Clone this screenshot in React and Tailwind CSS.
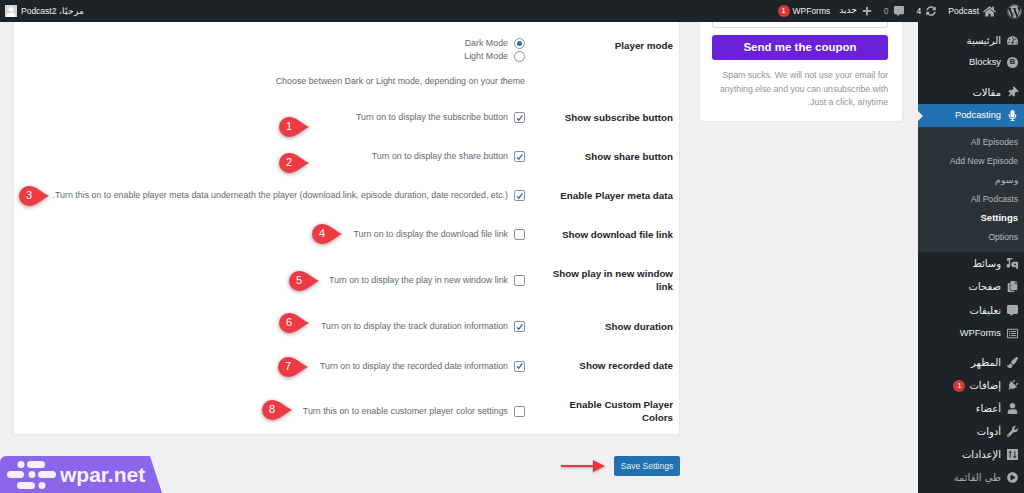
import React from 'react';
import {
    FaWordpress, FaHome, FaSyncAlt, FaCommentAlt, FaPlus, FaUser, FaTachometerAlt, FaThumbtack, FaMicrophone,
    FaCopy, FaPaintBrush, FaPlug, FaWrench, FaPlayCircle, FaRegListAlt,
} from 'react-icons/fa';

const rows = [
    { label: 'Show subscribe button', desc: 'Turn on to display the subscribe button', on: true, h: 'h-[39px]', mark: 1, mx: 'left-[265px]', my: 'top-[19px]' },
    { label: 'Show share button', desc: 'Turn on to display the share button', on: true, h: 'h-[39px]', mark: 2, mx: 'left-[265px]', my: 'top-[16px]' },
    { label: 'Enable Player meta data', desc: 'Turn this on to enable player meta data underneath the player (download link, episode duration, date recorded, etc.).', on: true, h: 'h-[39px]', mark: 3, mx: 'left-[5px]', my: 'top-[10px]' },
    { label: 'Show download file link', desc: 'Turn on to display the download file link', on: false, h: 'h-[39px]', mark: 4, mx: 'left-[298px]', my: 'top-[9px]' },
    { label: 'Show play in new window link', desc: 'Turn on to display the play in new window link', on: false, h: 'h-[53px]', mark: 5, mx: 'left-[275px]', my: 'top-[17px]' },
    { label: 'Show duration', desc: 'Turn on to display the track duration information', on: true, h: 'h-[39px]', mark: 6, mx: 'left-[265px]', my: 'top-[6px]' },
    { label: 'Show recorded date', desc: 'Turn on to display the recorded date information', on: true, h: 'h-[40px]', mark: 7, mx: 'left-[264px]', my: 'top-[11px]' },
    { label: 'Enable Custom Player Colors', desc: 'Turn this on to enable customer player color settings', on: false, h: 'h-[50px]', mark: 8, mx: 'left-[248px]', my: 'top-[14px]' },
];

const BlocksyIcon = () => (
    <span className="w-[11px] h-[11px] rounded-full bg-[#a7aaad] text-[#1d2327] text-[8px] font-bold flex items-center justify-center">B</span>
);

const MediaIcon = () => (
    <svg viewBox="0 0 14 14" className="w-[13px] h-[13px]" fill="currentColor">
        <path d="M1 1 H7 V2.5 H4.5 V9.5 A2 2 0 1 1 3 7.6 V4 H1 Z" />
        <path d="M8 5 H13 V13 H11 V11 H9.5 A3 3 0 0 1 8 5Z M9.8 7 A1 1 0 1 0 9.8 9 A1 1 0 1 0 9.8 7Z" fillRule="evenodd" />
    </svg>
);

const SettingsIcon = () => (
    <svg viewBox="0 0 12 12" className="w-[11px] h-[11px]" fill="currentColor">
        <path fillRule="evenodd" d="M0 0 H12 V12 H0 Z M2 3 V4 H3 V9.5 H4 V4 H5 V3 H4 V2 H3 V3 Z M7 8 V9 H8 V10 H9 V9 H10 V8 H9 V2.5 H8 V8 Z" />
    </svg>
);

const PinIcon = () => <FaThumbtack className="rotate-45" />;
const PlugIcon = () => <FaPlug className="rotate-45" />;

const subMenu = ['All Episodes', 'Add New Episode', 'وسوم', 'All Podcasts', 'Settings', 'Options'];

const menuMid = [
    { icon: MediaIcon, text: 'وسائط' },
    { icon: FaCopy, text: 'صفحات' },
    { icon: FaCommentAlt, text: 'تعليقات' },
    { icon: FaRegListAlt, text: 'WPForms', latin: true },
];

const menuLow = [
    { icon: FaPaintBrush, text: 'المظهر' },
    { icon: PlugIcon, text: 'إضافات', badge: 1 },
    { icon: FaUser, text: 'أعضاء' },
    { icon: FaWrench, text: 'أدوات' },
    { icon: SettingsIcon, text: 'الإعدادات' },
];

const Checkbox = ({ on }) => (
    <span className="w-[11px] h-[11px] shrink-0 bg-white border border-[#8c8f94] rounded-[2px] flex items-center justify-center">
        {on && (
            <svg viewBox="0 0 12 12" className="w-[10px] h-[10px]">
                <path d="M2.5 6.5 L5 9 L9.8 2.5" fill="none" stroke="#2271b1" strokeWidth="1.7" />
            </svg>
        )}
    </span>
);

const Marker = ({ n, className }) => (
    <div className={`absolute w-[30px] h-[20px] ${className}`}>
        <svg viewBox="0 0 30 20" className="absolute inset-0 w-[30px] h-[20px] overflow-visible drop-shadow-[0_1px_2px_rgba(0,0,0,0.4)]">
            <path d="M10 0 C17 0 22 6 30 10 C22 14 17 20 10 20 A10 10 0 0 1 10 0Z" fill="#ee3a43" />
        </svg>
        <span dir="ltr" className="absolute left-0 top-0 w-[20px] h-[20px] flex items-center justify-center text-white text-[11px]">{n}</span>
    </div>
);

const MenuItem = ({ icon: Icon, text, badge, latin, h = 'h-[23px]' }) => (
    <div className={`${h} flex items-center text-[#f0f0f1]`}>
        <span className="w-[23px] flex justify-center text-[#a7aaad] text-[11px]"><Icon /></span>
        <span className={latin ? 'text-[9.3px] pt-[1px]' : "text-[10px] font-['DejaVu_Sans',sans-serif]"}>{text}</span>
        {badge && <span className="mr-[4px] w-[12px] h-[12px] rounded-full bg-[#d63638] text-white text-[8px] flex items-center justify-center">{badge}</span>}
    </div>
);

export default function App() {
    return (
        <div dir="rtl" className="h-[493px] w-[1024px] overflow-hidden relative bg-[#f0f0f3] font-['Liberation_Sans',sans-serif]">
            {/* Admin bar */}
            <div className="h-[22px] bg-[#1d2327] flex items-center text-[#f0f0f1] text-[8.5px] pr-[2px] pl-[5px]">
                <FaWordpress className="text-[#a7aaad] text-[15px] ml-[11px]" />
                <FaHome className="text-[#a7aaad] text-[13px] ml-[4px]" />
                <span className="ml-[12px]">Podcast</span>
                <FaSyncAlt className="text-[#a7aaad] text-[10px] ml-[5px]" />
                <span className="ml-[13px]">4</span>
                <FaCommentAlt className="text-[#a7aaad] text-[10px] ml-[5px]" />
                <span className="ml-[12px] text-[#a7aaad]">0</span>
                <FaPlus className="text-[#a7aaad] text-[10px] ml-[5px]" />
                <span className="ml-[9px] font-['DejaVu_Sans',sans-serif] text-[9px]">جديد</span>
                <span className="ml-[3px]">WPForms</span>
                <span className="w-[12px] h-[12px] rounded-full bg-[#d63638] text-white text-[8px] flex items-center justify-center">1</span>
                <div className="mr-auto flex items-center gap-[4px]">
                    <span>مرحبًا، Podcast2</span>
                    <span className="w-[12px] h-[12px] bg-[#d5d5d5] flex items-end justify-center overflow-hidden"><FaUser className="text-white text-[10px]" /></span>
                </div>
            </div>

            <div className="flex h-[471px]">
                {/* Sidebar */}
                <div className="w-[106px] shrink-0 bg-[#1d2327] pt-[7px]">
                    <MenuItem icon={FaTachometerAlt} text="الرئيسية" h="h-[22px]" />
                    <MenuItem icon={BlocksyIcon} text="Blocksy" h="h-[22px]" latin />
                    <div className="h-[8px]" />
                    <MenuItem icon={PinIcon} text="مقالات" />
                    <div className="h-[23px] bg-[#2271b1] text-white flex items-center relative">
                        <span className="w-[23px] flex justify-center text-[11px]"><FaMicrophone /></span>
                        <span className="text-[9.3px]">Podcasting</span>
                        <span className="absolute left-0 top-[7px] w-0 h-0 border-y-[5px] border-y-transparent border-l-[5px] border-l-[#f0f0f3]" />
                    </div>
                    <div className="h-[125px] bg-[#2c3338] pt-[6px] pr-[6px]">
                        {subMenu.map(s => (
                            <div key={s} className={`h-[19px] flex items-center ${s === 'Settings' ? 'text-white font-bold text-[9.5px]' : 'text-[#b4b9be] text-[8.6px]'}`}>{s}</div>
                        ))}
                    </div>
                    {menuMid.map(m => <MenuItem key={m.text} {...m} h="h-[23.3px]" />)}
                    <div className="h-[6px]" />
                    {menuLow.map(m => <MenuItem key={m.text} {...m} />)}
                    <div className="h-[23px] flex items-center text-[#a7aaad]">
                        <span className="w-[23px] flex justify-center text-[11px]"><FaPlayCircle /></span>
                        <span className="text-[10px] font-['DejaVu_Sans',sans-serif]">طي القائمة</span>
                    </div>
                </div>

                {/* Content */}
                <div className="flex-1 min-w-0 flex items-start pr-[15px] gap-[19px] pl-[13px]">
                    {/* Coupon box */}
                    <div className="w-[204px] h-[100px] shrink-0 bg-white border border-[#e5e7eb] border-t-0 rounded-b-[4px] pr-[14px] pl-[12px]">
                        <div className="h-[6px] border border-t-0 border-[#dcdcde] rounded-b-[3px]" />
                        <div className="mt-[7px] h-[25px] rounded-[3px] bg-[#6b21d8] text-white text-[11.5px] font-bold flex items-center justify-center">Send me the coupon</div>
                        <p className="mt-[9px] text-[#8f949b] text-[8.7px] leading-[13.5px]">Spam sucks. We will not use your email for anything else and you can unsubscribe with Just a click, anytime.</p>
                    </div>

                    <div className="flex-1 min-w-0">
                        {/* Settings card */}
                        <div className="relative bg-white border border-[#e5e7eb] border-t-0 h-[413px] pr-[6px] text-[#646970] text-[8.85px]">
                            <div className="h-[75.5px] flex items-start">
                                <div className="w-[130px] mt-[17px] text-[#1d2327] text-[9.8px] font-bold leading-[13px]">Player mode</div>
                                <div className="mr-[18px] mt-[15px]">
                                    <div className="flex items-center gap-[6px] h-[13px]">
                                        <span className="w-[11px] h-[11px] rounded-full border border-[#8c8f94] flex items-center justify-center"><span className="w-[5px] h-[5px] rounded-full bg-[#2271b1]" /></span>
                                        <span>Dark Mode</span>
                                    </div>
                                    <div className="flex items-center gap-[6px] h-[13px]">
                                        <span className="w-[11px] h-[11px] rounded-full border border-[#8c8f94]" />
                                        <span>Light Mode</span>
                                    </div>
                                    <div className="mt-[12px]">Choose between Dark or Light mode, depending on your theme</div>
                                </div>
                            </div>
                            {rows.map(r => (
                                <div key={r.label} className={`${r.h} flex items-center`}>
                                    <div className="w-[130px] shrink-0 text-[#1d2327] text-[9.8px] font-bold leading-[13px]">{r.label}</div>
                                    <div className="mr-[18px] pt-[2px] flex items-center gap-[6px] whitespace-nowrap">
                                        <Checkbox on={r.on} />
                                        <span>{r.desc}</span>
                                    </div>
                                </div>
                            ))}
                            {/* numbered callouts */}
                            <div className="absolute inset-x-0 top-[75.5px]">
                                {rows.map(r => (
                                    <div key={r.mark} className={`relative ${r.h}`}>
                                        <Marker n={r.mark} className={`${r.mx} ${r.my}`} />
                                    </div>
                                ))}
                            </div>
                        </div>

                        {/* Save */}
                        <div className="mt-[21px] flex items-center">
                            <button className="w-[66px] h-[20px] bg-[#2271b1] rounded-[2px] text-[#e8f0f8] text-[8.5px]">Save Settings</button>
                            <svg viewBox="0 0 44 12" className="w-[44px] h-[12px] mr-[9px] drop-shadow-[0_1px_1px_rgba(0,0,0,0.3)]">
                                <path d="M0 5 H32 V0 L44 6 L32 12 V7 H0 Z" fill="#e8343c" />
                            </svg>
                        </div>
                    </div>
                </div>
            </div>

            {/* wpar.net watermark */}
            <div dir="ltr" className="absolute left-0 bottom-0 w-[162px] h-[37px] bg-[#8b66ea] rounded-tl-[6px] [clip-path:polygon(0_0,150px_0,162px_100%,0_100%)] flex items-center">
                <svg viewBox="0 0 50 37" className="w-[50px] h-[37px] ml-[6px] shrink-0">
                    <g fill="#f5f0ff">
                        <circle cx="15" cy="8.5" r="3.5" />
                        <rect x="21" y="5" width="18" height="7" rx="3.5" />
                        <rect x="1" y="15" width="17" height="7" rx="3.5" />
                        <circle cx="26" cy="18.5" r="3.5" />
                        <rect x="32" y="15" width="18" height="7" rx="3.5" />
                        <rect x="11" y="26" width="18" height="7" rx="3.5" />
                        <circle cx="36" cy="29.5" r="3.5" />
                    </g>
                </svg>
                <span className="ml-[4px] text-[#f5f0ff] text-[21px] font-bold leading-none">wpar.net</span>
            </div>
        </div>
    );
}
